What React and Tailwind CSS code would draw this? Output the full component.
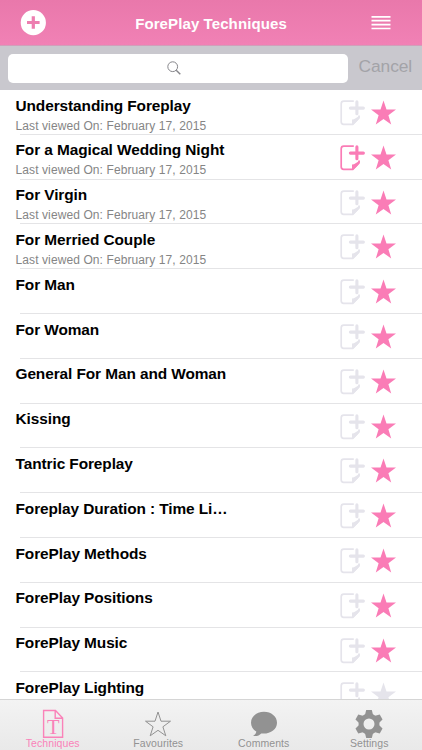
const viewed = 'Last viewed On: February 17, 2015';

const rows = [
  { title: 'Understanding Foreplay', sub: viewed, star: true },
  { title: 'For a Magical Wedding Night', sub: viewed, star: true, note: true },
  { title: 'For Virgin', sub: viewed, star: true },
  { title: 'For Merried Couple', sub: viewed, star: true },
  { title: 'For Man', star: true },
  { title: 'For Woman', star: true },
  { title: 'General For Man and Woman', star: true },
  { title: 'Kissing', star: true },
  { title: 'Tantric Foreplay', star: true },
  { title: 'Foreplay Duration : Time Li…', star: true },
  { title: 'ForePlay Methods', star: true },
  { title: 'ForePlay Positions', star: true },
  { title: 'ForePlay Music', star: true },
  { title: 'ForePlay Lighting', star: false },
];

const starPoints =
  '12.5,0.5 15.5,9.5 25,9.5 17.4,15.2 20.2,24.5 12.5,18.9 4.8,24.5 7.6,15.2 0,9.5 9.5,9.5';

function NoteIcon({ active }) {
  const color = active ? '#fa7cb6' : '#e5e4eb';
  return (
    <svg className="h-[26px] w-[26px] shrink-0" viewBox="0 0 26 26" fill="none">
      <path
        d="M13.8 1.2H3.8Q1.2 1.2 1.2 3.8V21.8Q1.2 24.3 3.6 24.3H12.8L19 18V15.4"
        stroke={color}
        strokeWidth="1.7"
      />
      <path d="M12 25V19.4Q13.6 19.6 15.6 18.2L20 15.6Q19.9 19.8 12.8 25Z" fill={color} />
      <path d="M16.9 1.9V13.8M10.4 8.1H23.4" stroke={color} strokeWidth="3.1" strokeLinecap="round" />
    </svg>
  );
}

function StarIcon({ active }) {
  return (
    <svg className="h-[25px] w-[25px] shrink-0" viewBox="0 0 25 25">
      <polygon points={starPoints} fill={active ? '#fa7cb6' : '#e5e4eb'} />
    </svg>
  );
}

function Row({ title, sub, star, note }) {
  return (
    <li className="flex h-[44.8px] shrink-0 flex-col">
      <div className="flex min-h-0 flex-1 pr-[26px] pl-[15.5px]">
        <div className="flex-1 whitespace-nowrap">
          <div className="pt-[6.6px] text-[15.4px] leading-[18px] font-bold tracking-[-0.08px] text-black">
            {title}
          </div>
          {sub && (
            <div className="pt-[3.1px] text-[12px] leading-[16px] tracking-[0.1px] text-[#858585]">{sub}</div>
          )}
        </div>
        <div className="flex gap-[5px] pt-[10px]">
          <NoteIcon active={note} />
          <StarIcon active={star} />
        </div>
      </div>
      <div className="ml-[20px] h-px shrink-0 bg-[#e4e4e6]" />
    </li>
  );
}

function Tab({ label, active, children }) {
  return (
    <div
      className={
        'flex flex-1 flex-col items-center pt-[9px] ' + (active ? 'text-[#fa82b9]' : 'text-[#929292]')
      }
    >
      <svg className="h-[30px] w-[30px] shrink-0" viewBox="0 0 30 30" fill="none">
        {children}
      </svg>
      <span className="-mt-[2px] text-[10.5px] leading-[12px] tracking-[0.08px]">{label}</span>
    </div>
  );
}

const tooth = 'M10.8 6.5L12.2 1H17.8L19.2 6.5Z';

export default function App() {
  return (
    <div className="flex h-[750px] w-[422px] flex-col overflow-hidden bg-white font-['Liberation_Sans',Arial,sans-serif]">
      <header className="flex h-[45px] shrink-0 items-center justify-between bg-linear-to-b from-[#e978ab] to-[#f181b5] pr-[31px] pl-[20px]">
        <svg className="h-[26px] w-[26px]" viewBox="0 0 26 26">
          <circle cx="13.3" cy="12.7" r="12.6" fill="#fff" />
          <path d="M13.3 6.2V18.8M7 12.5H19.6" stroke="#ed7eb0" strokeWidth="3.2" />
        </svg>
        <h1 className="ml-[5px] pt-[2px] text-[15px] leading-[20px] font-bold tracking-[0.1px] whitespace-nowrap text-white">
          ForePlay Techniques
        </h1>
        <svg className="h-[16px] w-[20px]" viewBox="0 0 20 16">
          <path
            d="M0.5 1.8H19.5M0.5 5.6H19.5M0.5 9.6H19.5M0.5 13.5H19.5"
            stroke="#fff"
            strokeWidth="1.7"
          />
        </svg>
      </header>
      <div className="flex h-[45px] shrink-0 items-center border-t border-[#d19fba] bg-[#c9c8ce] pr-[9px] pl-[8px]">
        <div className="flex h-[29px] w-[339.5px] shrink-0 items-center justify-center rounded-[5px] bg-white">
          <svg className="ml-[-8px] h-[14px] w-[14px]" viewBox="0 0 14 14" fill="none" stroke="#85858a">
            <circle cx="5.7" cy="5.7" r="4.9" strokeWidth="1" />
            <path d="M9.2 9.2L13.3 13.3" strokeWidth="1.4" />
          </svg>
        </div>
        <span className="-mt-[4px] ml-[11px] text-[17.4px] leading-[20px] tracking-[-0.08px] whitespace-nowrap text-[#a3a3a8]">
          Cancel
        </span>
      </div>
      <ul className="flex min-h-0 flex-1 flex-col overflow-hidden">
        {rows.map((row) => (
          <Row key={row.title} {...row} />
        ))}
      </ul>
      <nav className="flex h-[51px] shrink-0 border-t border-[#d5d5d5] bg-linear-to-b from-[#f3f3f3] to-[#e9e9e9]">
        <Tab label="Techniques" active>
          <path d="M5.6 1.5H17.5L24.6 9V28.3H5.6Z M17.2 1.5V9.2H24.6" stroke="currentColor" strokeWidth="1.4" />
          <text
            x="15.2"
            y="24.8"
            textAnchor="middle"
            fill="currentColor"
            className="font-['Liberation_Serif',serif] text-[20.5px]"
          >
            T
          </text>
        </Tab>
        <Tab label="Favourites">
          <polygon
            points="15,3 18,12.2 27.5,12.2 19.9,17.8 22.8,26.8 15,21.3 7.2,26.8 10.1,17.8 2.5,12.2 12,12.2"
            stroke="currentColor"
            strokeWidth="1"
          />
        </Tab>
        <Tab label="Comments">
          <path
            d="M15 2.8C7.8 2.8 2 7.6 2 13.7C2 17.4 4.1 20.6 7.3 22.6C7 24.7 5.8 26 4 26.8C7.2 27.6 10.5 26.4 12.2 24.4C20.8 25.4 28 20.8 28 13.7C28 7.6 22.2 2.8 15 2.8Z"
            fill="currentColor"
          />
        </Tab>
        <Tab label="Settings">
          <circle cx="15" cy="15" r="8" stroke="currentColor" strokeWidth="5" />
          {[0, 60, 120, 180, 240, 300].map((angle) => (
            <path key={angle} d={tooth} fill="currentColor" transform={`rotate(${angle} 15 15)`} />
          ))}
        </Tab>
      </nav>
    </div>
  );
}
